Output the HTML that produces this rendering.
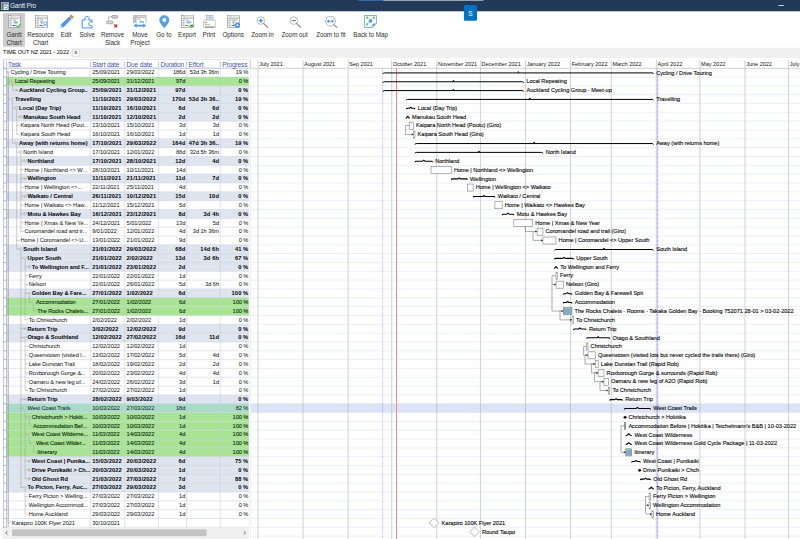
<!DOCTYPE html>
<html lang="en"><head><meta charset="utf-8"><title>Gantt Pro</title>
<style>
html,body{margin:0;padding:0;background:#fff;}
body{width:800px;height:539px;overflow:hidden;position:relative;font-family:"Liberation Sans",sans-serif;color:#1a1a1a;}
.abs{position:absolute;}
#title{left:10.0px;top:2.0px;font-size:6.5px;color:#e6eaef;line-height:7px;white-space:nowrap;letter-spacing:-0.2px;}
.tb{position:absolute;top:30.5px;font-size:6.3px;letter-spacing:-0.04px;line-height:8.1px;color:#2e2e2e;text-align:center;white-space:nowrap;transform:translateX(-50%);}
#tabtxt{left:3.1px;top:48.7px;-webkit-text-stroke:0.05px #222;font-size:5.5px;line-height:6px;color:#111;white-space:nowrap;}
#tabx{left:72.6px;top:49.4px;width:6.6px;height:6.8px;font-size:6.2px;line-height:6.2px;text-align:center;color:#222;}
.row{position:absolute;left:6.6px;width:242.4px;height:8.83px;}
.c{position:absolute;top:0.25px;font-size:5.7px;line-height:8.83px;height:8.83px;white-space:nowrap;color:#161616;letter-spacing:-0.08px;-webkit-text-stroke:0.03px #222;}
.b{font-weight:bold;letter-spacing:0.11px;color:#000;-webkit-text-stroke:0;}
.n.b{letter-spacing:-0.04px;}
.r{text-align:right;}
.hd{position:absolute;top:60.75px;font-size:6.55px;letter-spacing:-0.13px;line-height:8.6px;color:#4757a6;white-space:nowrap;}
.mo{position:absolute;top:59.5px;font-size:5.5px;line-height:8.3px;color:#111;white-space:nowrap;}
.gl{position:absolute;font-size:5.65px;line-height:8.83px;white-space:nowrap;color:#000;letter-spacing:-0.03px;-webkit-text-stroke:0.12px #222;}
</style></head><body>

<svg class="abs" style="left:0;top:0" width="800" height="539" viewBox="0 0 800 539"><rect x="0.00" y="0.00" width="800.00" height="11.30" fill="#223a57"/><rect x="358.40" y="0.00" width="24.80" height="0.90" fill="#2f6fb5"/><rect x="383.20" y="0.00" width="100.20" height="0.90" fill="#a9b1bd"/><rect x="778.30" y="5.00" width="5.60" height="0.85" fill="#dfe4ea"/><rect x="463.90" y="5.10" width="13.20" height="15.70" fill="#0072c1" rx="1.6"/><rect x="3.00" y="13.00" width="21.90" height="33.80" fill="#cdcdcd"/><rect x="0.00" y="47.70" width="800.00" height="10.30" fill="#f0f0f0"/><rect x="0.50" y="47.90" width="70.40" height="10.40" fill="#fff"/><rect x="72.60" y="49.40" width="6.60" height="6.80" fill="#f7f7f7" stroke="#d2d2d2" stroke-width="0.5"/><rect x="6.60" y="77.03" width="242.40" height="8.85" fill="#a8e494"/><rect x="6.60" y="85.86" width="242.40" height="8.85" fill="#dfe5ef"/><rect x="6.60" y="94.69" width="242.40" height="8.85" fill="#dfe5ef"/><rect x="6.60" y="103.52" width="242.40" height="8.85" fill="#dfe5ef"/><rect x="6.60" y="112.35" width="242.40" height="8.85" fill="#dfe5ef"/><rect x="6.60" y="138.84" width="242.40" height="8.85" fill="#dfe5ef"/><rect x="6.60" y="156.50" width="242.40" height="8.85" fill="#dfe5ef"/><rect x="6.60" y="174.16" width="242.40" height="8.85" fill="#dfe5ef"/><rect x="6.60" y="191.82" width="242.40" height="8.85" fill="#dfe5ef"/><rect x="6.60" y="209.48" width="242.40" height="8.85" fill="#dfe5ef"/><rect x="6.60" y="244.80" width="242.40" height="8.85" fill="#dfe5ef"/><rect x="6.60" y="253.63" width="242.40" height="8.85" fill="#dfe5ef"/><rect x="6.60" y="262.46" width="242.40" height="8.85" fill="#dfe5ef"/><rect x="6.60" y="288.95" width="242.40" height="8.85" fill="#dfe5ef"/><rect x="6.60" y="297.78" width="242.40" height="8.85" fill="#a8e494"/><rect x="6.60" y="306.61" width="242.40" height="8.85" fill="#a8e494"/><rect x="6.60" y="324.27" width="242.40" height="8.85" fill="#dfe5ef"/><rect x="6.60" y="333.10" width="242.40" height="8.85" fill="#dfe5ef"/><rect x="6.60" y="394.91" width="242.40" height="8.85" fill="#dfe5ef"/><rect x="6.60" y="403.74" width="242.40" height="8.85" fill="#a9dcc8"/><rect x="6.60" y="412.57" width="242.40" height="8.85" fill="#a8e494"/><rect x="6.60" y="421.40" width="242.40" height="8.85" fill="#a8e494"/><rect x="6.60" y="430.23" width="242.40" height="8.85" fill="#a8e494"/><rect x="6.60" y="439.06" width="242.40" height="8.85" fill="#a8e494"/><rect x="6.60" y="447.89" width="242.40" height="8.85" fill="#a8e494"/><rect x="6.60" y="456.72" width="242.40" height="8.85" fill="#dfe5ef"/><rect x="6.60" y="465.55" width="242.40" height="8.85" fill="#dfe5ef"/><rect x="6.60" y="474.38" width="242.40" height="8.85" fill="#dfe5ef"/><rect x="6.60" y="483.21" width="242.40" height="8.85" fill="#dfe5ef"/><rect x="250.70" y="403.74" width="549.60" height="8.83" fill="#dde3f7"/></svg>
<div id="title" class="abs">Gantt Pro</div>
<div class="abs" style="left:463.9px;top:5.85px;width:13.2px;height:15.7px;color:#fff;font-size:6.5px;line-height:15.7px;text-align:center">S</div>
<svg class="abs" style="left:0.8px;top:1.6px" width="8" height="8.4" viewBox="0 0 8 8.4"><rect x="0.2" y="0.2" width="7.6" height="8" fill="#eceef0" stroke="#9a9fa6" stroke-width="0.4"/><rect x="1.2" y="0.8" width="1.3" height="6.8" fill="#4d545c"/><path d="M0.4 2.2H7.6M0.4 4.2H2.6M0.4 6.2H2.6" stroke="#5d636b" stroke-width="0.45" fill="none"/><rect x="3.2" y="0.8" width="4" height="1.2" fill="#7d838b"/><rect x="3.4" y="3.6" width="2.8" height="1" fill="#3f86dc"/><path d="M4.3 6.3l1 1 1.9-2.2" stroke="#3da33d" stroke-width="0.9" fill="none"/></svg>
<div class="tb" style="left:14.0px">Gantt<br>Chart</div>
<div class="tb" style="left:40.6px">Resource<br>Chart</div>
<div class="tb" style="left:66.1px">Edit</div>
<div class="tb" style="left:87.2px">Solve</div>
<div class="tb" style="left:112.5px">Remove<br>Slack</div>
<div class="tb" style="left:140.0px">Move<br>Project</div>
<div class="tb" style="left:163.8px">Go to</div>
<div class="tb" style="left:187.1px">Export</div>
<div class="tb" style="left:208.9px">Print</div>
<div class="tb" style="left:233.1px">Options</div>
<div class="tb" style="left:262.4px">Zoom in</div>
<div class="tb" style="left:294.6px">Zoom out</div>
<div class="tb" style="left:330.8px">Zoom to fit</div>
<div class="tb" style="left:370.6px">Back to Map</div>
<svg class="abs" style="left:7.9px;top:14.9px" width="13" height="13.4" viewBox="0 0 13 13.4"><rect x="0.3" y="0.3" width="12" height="12.4" fill="#fff" stroke="#8d8d8d" stroke-width="0.6"/><rect x="3" y="0.6" width="9" height="2.6" fill="#e9e9e9"/><path d="M3 0.3V12.7M0.3 3.3H12.3M0.3 5.6H3M0.3 7.9H3M0.3 10.2H3" stroke="#8d8d8d" stroke-width="0.55" fill="none"/><rect x="4.4" y="4.3" width="3.6" height="1.5" fill="#c9c9c9"/><rect x="5.4" y="6.6" width="4.6" height="1" fill="#3f86d8"/><rect x="6.6" y="8.3" width="2.6" height="0.9" fill="#7db0ea"/><rect x="4.4" y="10" width="3.4" height="0.9" fill="#555"/><path d="M8.4 10.6l1.6 1.7 2.8-3.6" stroke="#3fae49" stroke-width="1.1" fill="none"/></svg>
<svg class="abs" style="left:34.5px;top:14.9px" width="13" height="13.4" viewBox="0 0 13 13.4"><rect x="0.3" y="0.3" width="12" height="12.4" fill="#fff" stroke="#8d8d8d" stroke-width="0.6"/><rect x="3" y="0.6" width="9" height="2.6" fill="#e9e9e9"/><path d="M3 0.3V12.7M0.3 3.3H12.3M0.3 5.6H3M0.3 7.9H3M0.3 10.2H3" stroke="#8d8d8d" stroke-width="0.55" fill="none"/><rect x="4.4" y="4.3" width="3.6" height="1.5" fill="#c9c9c9"/><rect x="5.4" y="6.6" width="2.6" height="1" fill="#3f86d8"/><rect x="5.8" y="8.3" width="1.8" height="0.9" fill="#7db0ea"/><rect x="4.4" y="10" width="3" height="0.9" fill="#555"/><circle cx="10.3" cy="8.2" r="1.5" fill="#fff" stroke="#4a90e2" stroke-width="0.7"/><path d="M7.9 12.9c0-2.2 1-2.9 2.4-2.9s2.4 0.7 2.4 2.9z" fill="#fff" stroke="#4a90e2" stroke-width="0.7"/></svg>
<svg class="abs" style="left:58.5px;top:13.6px" width="17" height="16" viewBox="0 0 17 16"><path d="M1.00 14.00L1.72 10.86L4.16 13.38Z" fill="#b4c8e0"/><path d="M1.72 10.86L10.30 2.56L12.73 5.07L4.16 13.38Z" fill="#4a90e2"/><path d="M2.87 9.75L5.31 12.27M4.17 8.50L6.60 11.01M5.46 7.25L7.89 9.76M6.75 6.00L9.19 8.51M8.04 4.74L10.48 7.26M9.34 3.49L11.77 6.01" stroke="#7fb3ee" stroke-width="0.45"/><path d="M10.73 2.14L12.38 0.54L14.82 3.06L13.16 4.66Z" fill="#bd8a30"/></svg>
<svg class="abs" style="left:81.4px;top:14.6px" width="13" height="14" viewBox="0 0 13 14"><path d="M1.2 5h3.1c-0.9-1.9-0.2-3.7 1.7-3.7s2.6 1.8 1.7 3.7h3.3v2.3c-1.9-0.9-3.3-0.2-3.3 1.5s1.4 2.4 3.3 1.5v2.6h-9.8z" fill="#fff" stroke="#4a8fdc" stroke-width="1"/></svg>
<svg class="abs" style="left:106px;top:14.8px" width="14" height="13.6" viewBox="0 0 14 13.6"><rect x="5.6" y="0.5" width="6.2" height="2.7" rx="1.1" fill="#cdcdcd" stroke="#868686" stroke-width="0.6"/><rect x="0.5" y="6" width="6.6" height="2.8" rx="1.1" fill="#d6d6d6" stroke="#868686" stroke-width="0.6"/><path d="M5.6 1.8H2.6V6" stroke="#8e8e8e" stroke-width="0.55" fill="none"/><path d="M8.3 9.3l3 3M11.3 9.3l-3 3" stroke="#c4161c" stroke-width="1.1"/></svg>
<svg class="abs" style="left:133.1px;top:14.9px" width="14" height="13.4" viewBox="0 0 14 13.4"><rect x="0.3" y="0.3" width="12.8" height="7.8" fill="#d6d6d6"/><rect x="3.2" y="2.6" width="9.6" height="5.6" fill="#fff"/><path d="M0.3 8.2V0.3H13.1V8.2M3.1 0.3V8.2M0.3 2.6H13.1M0.3 4.6H3M0.3 6.6H3" stroke="#9a9a9a" stroke-width="0.55" fill="none"/><rect x="4.4" y="3.6" width="3.4" height="1.3" fill="#c6c6c6"/><rect x="6.4" y="6.4" width="4.6" height="1" fill="#3f86d8"/><path d="M0.6 10.6l3-2.2v1.4h6.6V8.4l3 2.2-3 2.2v-1.4H3.6v1.4z" fill="#4f97e6"/></svg>
<svg class="abs" style="left:158.6px;top:14.7px" width="11" height="13.6" viewBox="0 0 11 13.6"><path d="M5.3 0.3c2.8 0 5 2.1 5 4.8 0 3.2-3.3 6-5 8.2-1.7-2.2-5-5-5-8.2 0-2.7 2.2-4.8 5-4.8z" fill="#5a9fe6"/><circle cx="5.3" cy="5" r="1.9" fill="#fff"/></svg>
<svg class="abs" style="left:180.8px;top:14.9px" width="13.4" height="13.4" viewBox="0 0 13.4 13.4"><rect x="0.3" y="0.3" width="12" height="12.4" fill="#fff" stroke="#8d8d8d" stroke-width="0.6"/><rect x="3" y="0.6" width="9" height="2.6" fill="#e9e9e9"/><path d="M3 0.3V12.7M0.3 3.3H12.3M0.3 5.6H3M0.3 7.9H3M0.3 10.2H3" stroke="#8d8d8d" stroke-width="0.55" fill="none"/><rect x="4.4" y="4.3" width="3.6" height="1.5" fill="#c9c9c9"/><rect x="5.4" y="6.6" width="4.6" height="1" fill="#3f86d8"/><rect x="6.6" y="8.3" width="1.6" height="0.9" fill="#7db0ea"/><rect x="4.4" y="10" width="2.4" height="0.9" fill="#555"/><path d="M7.6 11.8c0.5-1.3 1.6-1.9 3-1.9V8.8l2.4 2-2.4 2v-1.1c-1.2-0.1-2.2 0-3 0.1z" fill="#3fae49"/></svg>
<svg class="abs" style="left:202.8px;top:14.8px" width="13.4" height="13.6" viewBox="0 0 13.4 13.6"><rect x="3.2" y="0.4" width="6.8" height="5" fill="#e0e0e0" stroke="#9a9a9a" stroke-width="0.5"/><rect x="5.8" y="1.4" width="2.6" height="3" fill="#cfe1f7"/><rect x="6.4" y="2" width="1.6" height="0.7" fill="#4a90e2"/><rect x="0.4" y="5" width="12.4" height="7.4" rx="1.6" fill="#fff" stroke="#9a9a9a" stroke-width="0.6"/><rect x="2" y="11.4" width="9.4" height="1.4" fill="#9a9a9a"/><rect x="1.5" y="6.9" width="1.2" height="0.9" fill="#d33"/><rect x="2.9" y="6.9" width="1.2" height="0.9" fill="#3a3"/><rect x="1.5" y="9" width="5.4" height="0.7" fill="#d9a24a"/></svg>
<svg class="abs" style="left:227.1px;top:14.9px" width="13.4" height="13.4" viewBox="0 0 13.4 13.4"><rect x="0.3" y="0.3" width="12" height="12.4" fill="#fff" stroke="#8d8d8d" stroke-width="0.6"/><rect x="3" y="0.6" width="9" height="2.6" fill="#e9e9e9"/><path d="M3 0.3V12.7M0.3 3.3H12.3M0.3 5.6H3M0.3 7.9H3M0.3 10.2H3" stroke="#8d8d8d" stroke-width="0.55" fill="none"/><rect x="4.4" y="4.3" width="3.6" height="1.5" fill="#c9c9c9"/><rect x="4.4" y="4.3" width="6" height="1.5" fill="#c9c9c9"/><rect x="5.2" y="6.6" width="2.6" height="0.9" fill="#3f86d8"/><rect x="6.1" y="7.5" width="0.8" height="2" fill="#7db0ea"/><rect x="4.6" y="10" width="3" height="0.9" fill="#555"/><circle cx="10.4" cy="10.2" r="2.5" fill="#4a8fe0"/><circle cx="10.4" cy="10.2" r="2.9" fill="none" stroke="#4a8fe0" stroke-width="0.9" stroke-dasharray="1.1 1.18"/><rect x="9.5" y="9.4" width="1.8" height="1.6" fill="#fff"/></svg>
<svg class="abs" style="left:255px;top:14.5px" width="14" height="14" viewBox="0 0 14 14"><circle cx="5.8" cy="5.6" r="3.8" fill="#fff" stroke="#8c8c8c" stroke-width="0.6"/><path d="M8.54 8.34L12.44 12.24" stroke="#8c8c8c" stroke-width="1.1" stroke-linecap="round"/><path d="M3.7 5.6H7.9M5.8 3.5V7.7" stroke="#4a8fe0" stroke-width="1.3"/></svg>
<svg class="abs" style="left:288px;top:14.7px" width="14" height="14" viewBox="0 0 14 14"><circle cx="5.8" cy="5.6" r="3.8" fill="#fff" stroke="#8c8c8c" stroke-width="0.6"/><path d="M8.54 8.34L12.44 12.24" stroke="#8c8c8c" stroke-width="1.1" stroke-linecap="round"/><path d="M3.6 5.6H8" stroke="#4a8fe0" stroke-width="1.1"/></svg>
<svg class="abs" style="left:324px;top:14.6px" width="15" height="14" viewBox="0 0 15 14"><circle cx="6.5" cy="6.2" r="4.9" fill="#fff" stroke="#8c8c8c" stroke-width="0.6"/><path d="M10.03 9.73L12.73 12.43" stroke="#8c8c8c" stroke-width="1.1" stroke-linecap="round"/><path d="M2.8 6.2l2.2-1.7v3.4zM10.2 6.2l-2.2-1.7v3.4zM4.6 5.7h3.8v1H4.6z" fill="#4a8fe0"/></svg>
<svg class="abs" style="left:364.1px;top:15.1px" width="13.4" height="13" viewBox="0 0 13.4 13"><path d="M0.5 0.5H12.6V8.6L8.6 12.5H0.5z" fill="#fff" stroke="#4a8fe0" stroke-width="0.7"/><path d="M6.5 5.9L3 2.6M6.5 5.9L9.8 2.6M6.5 5.9L3 9.2" stroke="#8cc98c" stroke-width="0.5"/><rect x="2" y="1.6" width="2.2" height="2.2" rx="0.5" fill="#7cc47c"/><rect x="8.8" y="1.6" width="2.2" height="2.2" rx="0.5" fill="#7cc47c"/><rect x="2" y="8.2" width="2.2" height="2.2" rx="0.5" fill="#7cc47c"/><circle cx="6.5" cy="5.9" r="1.9" fill="#5a9fe6"/><path d="M7.6 12l1.4-3 3.2-0.9-2.3 2.1z" fill="#3f86d8"/></svg>
<div id="tabtxt" class="abs">TIME OUT NZ 2021 - 2022</div><div id="tabx" class="abs">x</div>
<div class="abs" style="left:2.6px;top:59.2px;width:246.4px;height:479.8px;border-left:0.5px solid #c5cad8;border-top:0.5px solid #e3e5ec;box-sizing:border-box"></div>
<div class="row" style="top:68.20px"><div class="c n" style="left:4.1px;">Cycling / Drive Touring</div><div class="c" style="left:85.7px;">25/09/2021</div><div class="c" style="left:120.0px;">29/03/2022</div><div class="c r" style="left:151.8px;width:26.9px;">186d</div><div class="c r" style="left:180.0px;width:32.4px;">53d 3h 36m</div><div class="c r" style="left:213.7px;width:28.0px;">19 %</div></div>
<div class="row" style="top:77.03px"><div class="c n" style="left:8.3px;color:#0a250a;-webkit-text-stroke:0.09px #0a250a;">Local Repeating</div><div class="c" style="left:85.7px;color:#0a250a;-webkit-text-stroke:0.09px #0a250a;">25/09/2021</div><div class="c" style="left:120.0px;color:#0a250a;-webkit-text-stroke:0.09px #0a250a;">31/12/2021</div><div class="c r" style="left:151.8px;width:26.9px;color:#0a250a;-webkit-text-stroke:0.09px #0a250a;">97d</div><div class="c r" style="left:180.0px;width:32.4px;color:#0a250a;-webkit-text-stroke:0.09px #0a250a;"></div><div class="c r" style="left:213.7px;width:28.0px;color:#0a250a;-webkit-text-stroke:0.09px #0a250a;">0 %</div></div>
<div class="row" style="top:85.86px"><div class="c b n" style="left:12.5px;">Auckland Cycling Group..</div><div class="c b" style="left:85.7px;">25/09/2021</div><div class="c b" style="left:120.0px;">31/12/2021</div><div class="c b r" style="left:151.8px;width:26.9px;">97d</div><div class="c b r" style="left:180.0px;width:32.4px;"></div><div class="c b r" style="left:213.7px;width:28.0px;">0 %</div></div>
<div class="row" style="top:94.69px"><div class="c b n" style="left:8.3px;">Travelling</div><div class="c b" style="left:85.7px;">11/10/2021</div><div class="c b" style="left:120.0px;">29/03/2022</div><div class="c b r" style="left:151.8px;width:26.9px;">170d</div><div class="c b r" style="left:180.0px;width:32.4px;">53d 3h 36..</div><div class="c b r" style="left:213.7px;width:28.0px;">19 %</div></div>
<div class="row" style="top:103.52px"><div class="c b n" style="left:12.5px;">Local (Day Trip)</div><div class="c b" style="left:85.7px;">11/10/2021</div><div class="c b" style="left:120.0px;">16/10/2021</div><div class="c b r" style="left:151.8px;width:26.9px;">6d</div><div class="c b r" style="left:180.0px;width:32.4px;">6d</div><div class="c b r" style="left:213.7px;width:28.0px;">0 %</div></div>
<div class="row" style="top:112.35px"><div class="c b n" style="left:16.7px;">Manukau South Head</div><div class="c b" style="left:85.7px;">11/10/2021</div><div class="c b" style="left:120.0px;">12/10/2021</div><div class="c b r" style="left:151.8px;width:26.9px;">2d</div><div class="c b r" style="left:180.0px;width:32.4px;">2d</div><div class="c b r" style="left:213.7px;width:28.0px;">0 %</div></div>
<div class="row" style="top:121.18px"><div class="c n" style="left:13.8px;">Kaipara North Head (Pout...</div><div class="c" style="left:85.7px;">13/10/2021</div><div class="c" style="left:120.0px;">15/10/2021</div><div class="c r" style="left:151.8px;width:26.9px;">3d</div><div class="c r" style="left:180.0px;width:32.4px;">3d</div><div class="c r" style="left:213.7px;width:28.0px;">0 %</div></div>
<div class="row" style="top:130.01px"><div class="c n" style="left:13.8px;">Kaipara South Head</div><div class="c" style="left:85.7px;">16/10/2021</div><div class="c" style="left:120.0px;">16/10/2021</div><div class="c r" style="left:151.8px;width:26.9px;">1d</div><div class="c r" style="left:180.0px;width:32.4px;">1d</div><div class="c r" style="left:213.7px;width:28.0px;">0 %</div></div>
<div class="row" style="top:138.84px"><div class="c b n" style="left:12.5px;">Away (with returns home)</div><div class="c b" style="left:85.7px;">17/10/2021</div><div class="c b" style="left:120.0px;">29/03/2022</div><div class="c b r" style="left:151.8px;width:26.9px;">164d</div><div class="c b r" style="left:180.0px;width:32.4px;">47d 3h 36..</div><div class="c b r" style="left:213.7px;width:28.0px;">19 %</div></div>
<div class="row" style="top:147.67px"><div class="c n" style="left:16.7px;">North Island</div><div class="c" style="left:85.7px;">17/10/2021</div><div class="c" style="left:120.0px;">12/01/2022</div><div class="c r" style="left:151.8px;width:26.9px;">88d</div><div class="c r" style="left:180.0px;width:32.4px;">32d 5h 36m</div><div class="c r" style="left:213.7px;width:28.0px;">0 %</div></div>
<div class="row" style="top:156.50px"><div class="c b n" style="left:20.9px;">Northland</div><div class="c b" style="left:85.7px;">17/10/2021</div><div class="c b" style="left:120.0px;">28/10/2021</div><div class="c b r" style="left:151.8px;width:26.9px;">12d</div><div class="c b r" style="left:180.0px;width:32.4px;">4d</div><div class="c b r" style="left:213.7px;width:28.0px;">0 %</div></div>
<div class="row" style="top:165.33px"><div class="c n" style="left:18.0px;">Home | Northland &lt;&gt; W...</div><div class="c" style="left:85.7px;">28/10/2021</div><div class="c" style="left:120.0px;">10/11/2021</div><div class="c r" style="left:151.8px;width:26.9px;">14d</div><div class="c r" style="left:180.0px;width:32.4px;"></div><div class="c r" style="left:213.7px;width:28.0px;">0 %</div></div>
<div class="row" style="top:174.16px"><div class="c b n" style="left:20.9px;">Wellington</div><div class="c b" style="left:85.7px;">11/11/2021</div><div class="c b" style="left:120.0px;">21/11/2021</div><div class="c b r" style="left:151.8px;width:26.9px;">11d</div><div class="c b r" style="left:180.0px;width:32.4px;">7d</div><div class="c b r" style="left:213.7px;width:28.0px;">0 %</div></div>
<div class="row" style="top:182.99px"><div class="c n" style="left:18.0px;">Home | Wellington &lt;&gt;...</div><div class="c" style="left:85.7px;">22/11/2021</div><div class="c" style="left:120.0px;">25/11/2021</div><div class="c r" style="left:151.8px;width:26.9px;">4d</div><div class="c r" style="left:180.0px;width:32.4px;"></div><div class="c r" style="left:213.7px;width:28.0px;">0 %</div></div>
<div class="row" style="top:191.82px"><div class="c b n" style="left:20.9px;">Waikato / Central</div><div class="c b" style="left:85.7px;">26/11/2021</div><div class="c b" style="left:120.0px;">10/12/2021</div><div class="c b r" style="left:151.8px;width:26.9px;">15d</div><div class="c b r" style="left:180.0px;width:32.4px;">10d</div><div class="c b r" style="left:213.7px;width:28.0px;">0 %</div></div>
<div class="row" style="top:200.65px"><div class="c n" style="left:18.0px;">Home | Waikato &lt;&gt; Haw...</div><div class="c" style="left:85.7px;">11/12/2021</div><div class="c" style="left:120.0px;">15/12/2021</div><div class="c r" style="left:151.8px;width:26.9px;">5d</div><div class="c r" style="left:180.0px;width:32.4px;"></div><div class="c r" style="left:213.7px;width:28.0px;">0 %</div></div>
<div class="row" style="top:209.48px"><div class="c b n" style="left:20.9px;">Motu &amp; Hawkes Bay</div><div class="c b" style="left:85.7px;">16/12/2021</div><div class="c b" style="left:120.0px;">23/12/2021</div><div class="c b r" style="left:151.8px;width:26.9px;">8d</div><div class="c b r" style="left:180.0px;width:32.4px;">3d 4h</div><div class="c b r" style="left:213.7px;width:28.0px;">0 %</div></div>
<div class="row" style="top:218.31px"><div class="c n" style="left:18.0px;">Home | Xmas &amp; New Ye...</div><div class="c" style="left:85.7px;">24/12/2021</div><div class="c" style="left:120.0px;">5/01/2022</div><div class="c r" style="left:151.8px;width:26.9px;">13d</div><div class="c r" style="left:180.0px;width:32.4px;">5d</div><div class="c r" style="left:213.7px;width:28.0px;">0 %</div></div>
<div class="row" style="top:227.14px"><div class="c n" style="left:18.0px;">Coromandel road and tr...</div><div class="c" style="left:85.7px;">9/01/2022</div><div class="c" style="left:120.0px;">12/01/2022</div><div class="c r" style="left:151.8px;width:26.9px;">4d</div><div class="c r" style="left:180.0px;width:32.4px;">3d 1h 36m</div><div class="c r" style="left:213.7px;width:28.0px;">0 %</div></div>
<div class="row" style="top:235.97px"><div class="c n" style="left:13.8px;">Home | Coromandel &lt;&gt; U...</div><div class="c" style="left:85.7px;">13/01/2022</div><div class="c" style="left:120.0px;">21/01/2022</div><div class="c r" style="left:151.8px;width:26.9px;">9d</div><div class="c r" style="left:180.0px;width:32.4px;"></div><div class="c r" style="left:213.7px;width:28.0px;">0 %</div></div>
<div class="row" style="top:244.80px"><div class="c b n" style="left:16.7px;">South Island</div><div class="c b" style="left:85.7px;">21/01/2022</div><div class="c b" style="left:120.0px;">29/03/2022</div><div class="c b r" style="left:151.8px;width:26.9px;">68d</div><div class="c b r" style="left:180.0px;width:32.4px;">14d 6h</div><div class="c b r" style="left:213.7px;width:28.0px;">41 %</div></div>
<div class="row" style="top:253.63px"><div class="c b n" style="left:20.9px;">Upper South</div><div class="c b" style="left:85.7px;">21/01/2022</div><div class="c b" style="left:120.0px;">2/02/2022</div><div class="c b r" style="left:151.8px;width:26.9px;">13d</div><div class="c b r" style="left:180.0px;width:32.4px;">3d 6h</div><div class="c b r" style="left:213.7px;width:28.0px;">67 %</div></div>
<div class="row" style="top:262.46px"><div class="c b n" style="left:25.1px;">To Wellington and F...</div><div class="c b" style="left:85.7px;">21/01/2022</div><div class="c b" style="left:120.0px;">23/01/2022</div><div class="c b r" style="left:151.8px;width:26.9px;">2d</div><div class="c b r" style="left:180.0px;width:32.4px;"></div><div class="c b r" style="left:213.7px;width:28.0px;">0 %</div></div>
<div class="row" style="top:271.29px"><div class="c n" style="left:22.2px;">Ferry</div><div class="c" style="left:85.7px;">22/01/2022</div><div class="c" style="left:120.0px;">22/01/2022</div><div class="c r" style="left:151.8px;width:26.9px;">1d</div><div class="c r" style="left:180.0px;width:32.4px;"></div><div class="c r" style="left:213.7px;width:28.0px;">0 %</div></div>
<div class="row" style="top:280.12px"><div class="c n" style="left:22.2px;">Nelson</div><div class="c" style="left:85.7px;">22/01/2022</div><div class="c" style="left:120.0px;">26/01/2022</div><div class="c r" style="left:151.8px;width:26.9px;">5d</div><div class="c r" style="left:180.0px;width:32.4px;">3d 6h</div><div class="c r" style="left:213.7px;width:28.0px;">0 %</div></div>
<div class="row" style="top:288.95px"><div class="c b n" style="left:25.1px;">Golden Bay &amp; Fare...</div><div class="c b" style="left:85.7px;">27/01/2022</div><div class="c b" style="left:120.0px;">1/02/2022</div><div class="c b r" style="left:151.8px;width:26.9px;">6d</div><div class="c b r" style="left:180.0px;width:32.4px;"></div><div class="c b r" style="left:213.7px;width:28.0px;">100 %</div></div>
<div class="row" style="top:297.78px"><div class="c n" style="left:29.3px;color:#0a250a;-webkit-text-stroke:0.09px #0a250a;">Accommodation</div><div class="c" style="left:85.7px;color:#0a250a;-webkit-text-stroke:0.09px #0a250a;">27/01/2022</div><div class="c" style="left:120.0px;color:#0a250a;-webkit-text-stroke:0.09px #0a250a;">1/02/2022</div><div class="c r" style="left:151.8px;width:26.9px;color:#0a250a;-webkit-text-stroke:0.09px #0a250a;">6d</div><div class="c r" style="left:180.0px;width:32.4px;color:#0a250a;-webkit-text-stroke:0.09px #0a250a;"></div><div class="c r" style="left:213.7px;width:28.0px;color:#0a250a;-webkit-text-stroke:0.09px #0a250a;">100 %</div></div>
<div class="row" style="top:306.61px"><div class="c n" style="left:30.6px;color:#0a250a;-webkit-text-stroke:0.09px #0a250a;">The Rocks Chalets...</div><div class="c" style="left:85.7px;color:#0a250a;-webkit-text-stroke:0.09px #0a250a;">27/01/2022</div><div class="c" style="left:120.0px;color:#0a250a;-webkit-text-stroke:0.09px #0a250a;">1/02/2022</div><div class="c r" style="left:151.8px;width:26.9px;color:#0a250a;-webkit-text-stroke:0.09px #0a250a;">6d</div><div class="c r" style="left:180.0px;width:32.4px;color:#0a250a;-webkit-text-stroke:0.09px #0a250a;"></div><div class="c r" style="left:213.7px;width:28.0px;color:#0a250a;-webkit-text-stroke:0.09px #0a250a;">100 %</div></div>
<div class="row" style="top:315.44px"><div class="c n" style="left:22.2px;">To Christchurch</div><div class="c" style="left:85.7px;">2/02/2022</div><div class="c" style="left:120.0px;">2/02/2022</div><div class="c r" style="left:151.8px;width:26.9px;">1d</div><div class="c r" style="left:180.0px;width:32.4px;"></div><div class="c r" style="left:213.7px;width:28.0px;">0 %</div></div>
<div class="row" style="top:324.27px"><div class="c b n" style="left:20.9px;">Return Trip</div><div class="c b" style="left:85.7px;">3/02/2022</div><div class="c b" style="left:120.0px;">12/02/2022</div><div class="c b r" style="left:151.8px;width:26.9px;">9d</div><div class="c b r" style="left:180.0px;width:32.4px;"></div><div class="c b r" style="left:213.7px;width:28.0px;">0 %</div></div>
<div class="row" style="top:333.10px"><div class="c b n" style="left:20.9px;">Otago &amp; Southland</div><div class="c b" style="left:85.7px;">12/02/2022</div><div class="c b" style="left:120.0px;">27/02/2022</div><div class="c b r" style="left:151.8px;width:26.9px;">16d</div><div class="c b r" style="left:180.0px;width:32.4px;">11d</div><div class="c b r" style="left:213.7px;width:28.0px;">0 %</div></div>
<div class="row" style="top:341.93px"><div class="c n" style="left:22.2px;">Christchurch</div><div class="c" style="left:85.7px;">12/02/2022</div><div class="c" style="left:120.0px;">12/02/2022</div><div class="c r" style="left:151.8px;width:26.9px;">1d</div><div class="c r" style="left:180.0px;width:32.4px;"></div><div class="c r" style="left:213.7px;width:28.0px;">0 %</div></div>
<div class="row" style="top:350.76px"><div class="c n" style="left:22.2px;">Queenstown (visited l...</div><div class="c" style="left:85.7px;">13/02/2022</div><div class="c" style="left:120.0px;">17/02/2022</div><div class="c r" style="left:151.8px;width:26.9px;">5d</div><div class="c r" style="left:180.0px;width:32.4px;">4d</div><div class="c r" style="left:213.7px;width:28.0px;">0 %</div></div>
<div class="row" style="top:359.59px"><div class="c n" style="left:22.2px;">Lake Dunstan Trail</div><div class="c" style="left:85.7px;">18/02/2022</div><div class="c" style="left:120.0px;">19/02/2022</div><div class="c r" style="left:151.8px;width:26.9px;">2d</div><div class="c r" style="left:180.0px;width:32.4px;">2d</div><div class="c r" style="left:213.7px;width:28.0px;">0 %</div></div>
<div class="row" style="top:368.42px"><div class="c n" style="left:22.2px;">Roxborough Gorge &amp;...</div><div class="c" style="left:85.7px;">20/02/2022</div><div class="c" style="left:120.0px;">23/02/2022</div><div class="c r" style="left:151.8px;width:26.9px;">4d</div><div class="c r" style="left:180.0px;width:32.4px;">4d</div><div class="c r" style="left:213.7px;width:28.0px;">0 %</div></div>
<div class="row" style="top:377.25px"><div class="c n" style="left:22.2px;">Oamaru &amp; new leg of...</div><div class="c" style="left:85.7px;">24/02/2022</div><div class="c" style="left:120.0px;">26/02/2022</div><div class="c r" style="left:151.8px;width:26.9px;">3d</div><div class="c r" style="left:180.0px;width:32.4px;">1d</div><div class="c r" style="left:213.7px;width:28.0px;">0 %</div></div>
<div class="row" style="top:386.08px"><div class="c n" style="left:22.2px;">To Christchurch</div><div class="c" style="left:85.7px;">27/02/2022</div><div class="c" style="left:120.0px;">27/02/2022</div><div class="c r" style="left:151.8px;width:26.9px;">1d</div><div class="c r" style="left:180.0px;width:32.4px;"></div><div class="c r" style="left:213.7px;width:28.0px;">0 %</div></div>
<div class="row" style="top:394.91px"><div class="c b n" style="left:20.9px;">Return Trip</div><div class="c b" style="left:85.7px;">28/02/2022</div><div class="c b" style="left:120.0px;">9/03/2022</div><div class="c b r" style="left:151.8px;width:26.9px;">9d</div><div class="c b r" style="left:180.0px;width:32.4px;"></div><div class="c b r" style="left:213.7px;width:28.0px;">0 %</div></div>
<div class="row" style="top:403.74px"><div class="c n" style="left:20.9px;">West Coast Trails</div><div class="c" style="left:85.7px;">10/03/2022</div><div class="c" style="left:120.0px;">27/03/2022</div><div class="c r" style="left:151.8px;width:26.9px;">18d</div><div class="c r" style="left:180.0px;width:32.4px;"></div><div class="c r" style="left:213.7px;width:28.0px;">82 %</div></div>
<div class="row" style="top:412.57px"><div class="c n" style="left:25.1px;color:#0a250a;-webkit-text-stroke:0.09px #0a250a;">Christchurch &gt; Hokiti...</div><div class="c" style="left:85.7px;color:#0a250a;-webkit-text-stroke:0.09px #0a250a;">10/03/2022</div><div class="c" style="left:120.0px;color:#0a250a;-webkit-text-stroke:0.09px #0a250a;">10/03/2022</div><div class="c r" style="left:151.8px;width:26.9px;color:#0a250a;-webkit-text-stroke:0.09px #0a250a;">1d</div><div class="c r" style="left:180.0px;width:32.4px;color:#0a250a;-webkit-text-stroke:0.09px #0a250a;"></div><div class="c r" style="left:213.7px;width:28.0px;color:#0a250a;-webkit-text-stroke:0.09px #0a250a;">100 %</div></div>
<div class="row" style="top:421.40px"><div class="c n" style="left:26.4px;color:#0a250a;-webkit-text-stroke:0.09px #0a250a;">Accommodation Bef...</div><div class="c" style="left:85.7px;color:#0a250a;-webkit-text-stroke:0.09px #0a250a;">10/03/2022</div><div class="c" style="left:120.0px;color:#0a250a;-webkit-text-stroke:0.09px #0a250a;">10/03/2022</div><div class="c r" style="left:151.8px;width:26.9px;color:#0a250a;-webkit-text-stroke:0.09px #0a250a;">1d</div><div class="c r" style="left:180.0px;width:32.4px;color:#0a250a;-webkit-text-stroke:0.09px #0a250a;"></div><div class="c r" style="left:213.7px;width:28.0px;color:#0a250a;-webkit-text-stroke:0.09px #0a250a;">100 %</div></div>
<div class="row" style="top:430.23px"><div class="c n" style="left:25.1px;color:#0a250a;-webkit-text-stroke:0.09px #0a250a;">West Coast Wilderne...</div><div class="c" style="left:85.7px;color:#0a250a;-webkit-text-stroke:0.09px #0a250a;">11/03/2022</div><div class="c" style="left:120.0px;color:#0a250a;-webkit-text-stroke:0.09px #0a250a;">14/03/2022</div><div class="c r" style="left:151.8px;width:26.9px;color:#0a250a;-webkit-text-stroke:0.09px #0a250a;">4d</div><div class="c r" style="left:180.0px;width:32.4px;color:#0a250a;-webkit-text-stroke:0.09px #0a250a;"></div><div class="c r" style="left:213.7px;width:28.0px;color:#0a250a;-webkit-text-stroke:0.09px #0a250a;">100 %</div></div>
<div class="row" style="top:439.06px"><div class="c n" style="left:29.3px;color:#0a250a;-webkit-text-stroke:0.09px #0a250a;">West Coast Wilder...</div><div class="c" style="left:85.7px;color:#0a250a;-webkit-text-stroke:0.09px #0a250a;">11/03/2022</div><div class="c" style="left:120.0px;color:#0a250a;-webkit-text-stroke:0.09px #0a250a;">14/03/2022</div><div class="c r" style="left:151.8px;width:26.9px;color:#0a250a;-webkit-text-stroke:0.09px #0a250a;">4d</div><div class="c r" style="left:180.0px;width:32.4px;color:#0a250a;-webkit-text-stroke:0.09px #0a250a;"></div><div class="c r" style="left:213.7px;width:28.0px;color:#0a250a;-webkit-text-stroke:0.09px #0a250a;">100 %</div></div>
<div class="row" style="top:447.89px"><div class="c n" style="left:30.6px;color:#0a250a;-webkit-text-stroke:0.09px #0a250a;">Itinerary</div><div class="c" style="left:85.7px;color:#0a250a;-webkit-text-stroke:0.09px #0a250a;">11/03/2022</div><div class="c" style="left:120.0px;color:#0a250a;-webkit-text-stroke:0.09px #0a250a;">14/03/2022</div><div class="c r" style="left:151.8px;width:26.9px;color:#0a250a;-webkit-text-stroke:0.09px #0a250a;">4d</div><div class="c r" style="left:180.0px;width:32.4px;color:#0a250a;-webkit-text-stroke:0.09px #0a250a;"></div><div class="c r" style="left:213.7px;width:28.0px;color:#0a250a;-webkit-text-stroke:0.09px #0a250a;">100 %</div></div>
<div class="row" style="top:456.72px"><div class="c b n" style="left:25.1px;">West Coast | Punika...</div><div class="c b" style="left:85.7px;">15/03/2022</div><div class="c b" style="left:120.0px;">20/03/2022</div><div class="c b r" style="left:151.8px;width:26.9px;">6d</div><div class="c b r" style="left:180.0px;width:32.4px;"></div><div class="c b r" style="left:213.7px;width:28.0px;">75 %</div></div>
<div class="row" style="top:465.55px"><div class="c b n" style="left:25.1px;">Drive Punikaiki &gt; Ch...</div><div class="c b" style="left:85.7px;">20/03/2022</div><div class="c b" style="left:120.0px;">20/03/2022</div><div class="c b r" style="left:151.8px;width:26.9px;">1d</div><div class="c b r" style="left:180.0px;width:32.4px;"></div><div class="c b r" style="left:213.7px;width:28.0px;">0 %</div></div>
<div class="row" style="top:474.38px"><div class="c b n" style="left:25.1px;">Old Ghost Rd</div><div class="c b" style="left:85.7px;">21/03/2022</div><div class="c b" style="left:120.0px;">27/03/2022</div><div class="c b r" style="left:151.8px;width:26.9px;">7d</div><div class="c b r" style="left:180.0px;width:32.4px;"></div><div class="c b r" style="left:213.7px;width:28.0px;">88 %</div></div>
<div class="row" style="top:483.21px"><div class="c b n" style="left:20.9px;">To Picton, Ferry, Auc...</div><div class="c b" style="left:85.7px;">27/03/2022</div><div class="c b" style="left:120.0px;">29/03/2022</div><div class="c b r" style="left:151.8px;width:26.9px;">3d</div><div class="c b r" style="left:180.0px;width:32.4px;"></div><div class="c b r" style="left:213.7px;width:28.0px;">0 %</div></div>
<div class="row" style="top:492.04px"><div class="c n" style="left:22.2px;">Ferry Picton &gt; Welling...</div><div class="c" style="left:85.7px;">27/03/2022</div><div class="c" style="left:120.0px;">27/03/2022</div><div class="c r" style="left:151.8px;width:26.9px;">1d</div><div class="c r" style="left:180.0px;width:32.4px;"></div><div class="c r" style="left:213.7px;width:28.0px;">0 %</div></div>
<div class="row" style="top:500.87px"><div class="c n" style="left:22.2px;">Wellington Accommod...</div><div class="c" style="left:85.7px;">27/03/2022</div><div class="c" style="left:120.0px;">27/03/2022</div><div class="c r" style="left:151.8px;width:26.9px;">1d</div><div class="c r" style="left:180.0px;width:32.4px;"></div><div class="c r" style="left:213.7px;width:28.0px;">0 %</div></div>
<div class="row" style="top:509.70px"><div class="c n" style="left:22.2px;">Home Auckland</div><div class="c" style="left:85.7px;">29/03/2022</div><div class="c" style="left:120.0px;">29/03/2022</div><div class="c r" style="left:151.8px;width:26.9px;">1d</div><div class="c r" style="left:180.0px;width:32.4px;"></div><div class="c r" style="left:213.7px;width:28.0px;">0 %</div></div>
<div class="row" style="top:518.53px"><div class="c n" style="left:5.4px;">Karapiro 100K Flyer 2021</div><div class="c" style="left:85.7px;">30/10/2021</div><div class="c" style="left:120.0px;"></div><div class="c r" style="left:151.8px;width:26.9px;"></div><div class="c r" style="left:180.0px;width:32.4px;"></div><div class="c r" style="left:213.7px;width:28.0px;"></div></div>
<svg class="abs" style="left:0;top:0" width="260" height="539" viewBox="0 0 260 539"><path d="M8.30 73.92V522.95" stroke="#9a9a9a" stroke-width="0.5"/><path d="M8.30 81.45H11.30" stroke="#9a9a9a" stroke-width="0.5"/><path d="M8.30 99.11H11.30" stroke="#9a9a9a" stroke-width="0.5"/><path d="M8.30 522.95H11.20" stroke="#9a9a9a" stroke-width="0.5"/><path d="M12.50 82.75V90.28" stroke="#9a9a9a" stroke-width="0.5"/><path d="M12.50 90.28H15.50" stroke="#9a9a9a" stroke-width="0.5"/><path d="M12.50 100.41V143.25" stroke="#9a9a9a" stroke-width="0.5"/><path d="M12.50 107.94H15.50" stroke="#9a9a9a" stroke-width="0.5"/><path d="M12.50 143.25H15.50" stroke="#9a9a9a" stroke-width="0.5"/><path d="M16.70 109.23V134.43" stroke="#9a9a9a" stroke-width="0.5"/><path d="M16.70 116.77H19.70" stroke="#9a9a9a" stroke-width="0.5"/><path d="M16.70 125.59H19.60" stroke="#9a9a9a" stroke-width="0.5"/><path d="M16.70 134.43H19.60" stroke="#9a9a9a" stroke-width="0.5"/><path d="M16.70 144.56V249.22" stroke="#9a9a9a" stroke-width="0.5"/><path d="M16.70 152.09H19.70" stroke="#9a9a9a" stroke-width="0.5"/><path d="M16.70 240.38H19.60" stroke="#9a9a9a" stroke-width="0.5"/><path d="M16.70 249.22H19.70" stroke="#9a9a9a" stroke-width="0.5"/><path d="M20.90 153.39V231.56" stroke="#9a9a9a" stroke-width="0.5"/><path d="M20.90 160.92H23.90" stroke="#9a9a9a" stroke-width="0.5"/><path d="M20.90 169.75H23.80" stroke="#9a9a9a" stroke-width="0.5"/><path d="M20.90 178.57H23.90" stroke="#9a9a9a" stroke-width="0.5"/><path d="M20.90 187.41H23.80" stroke="#9a9a9a" stroke-width="0.5"/><path d="M20.90 196.24H23.90" stroke="#9a9a9a" stroke-width="0.5"/><path d="M20.90 205.06H23.80" stroke="#9a9a9a" stroke-width="0.5"/><path d="M20.90 213.89H23.90" stroke="#9a9a9a" stroke-width="0.5"/><path d="M20.90 222.73H23.80" stroke="#9a9a9a" stroke-width="0.5"/><path d="M20.90 231.56H23.80" stroke="#9a9a9a" stroke-width="0.5"/><path d="M20.90 250.52V487.62" stroke="#9a9a9a" stroke-width="0.5"/><path d="M20.90 258.05H23.90" stroke="#9a9a9a" stroke-width="0.5"/><path d="M20.90 328.69H23.90" stroke="#9a9a9a" stroke-width="0.5"/><path d="M20.90 337.51H23.90" stroke="#9a9a9a" stroke-width="0.5"/><path d="M20.90 399.32H23.90" stroke="#9a9a9a" stroke-width="0.5"/><path d="M20.90 408.15H23.90" stroke="#9a9a9a" stroke-width="0.5"/><path d="M20.90 487.62H23.90" stroke="#9a9a9a" stroke-width="0.5"/><path d="M25.10 259.35V319.86" stroke="#9a9a9a" stroke-width="0.5"/><path d="M25.10 266.88H28.10" stroke="#9a9a9a" stroke-width="0.5"/><path d="M25.10 275.70H28.00" stroke="#9a9a9a" stroke-width="0.5"/><path d="M25.10 284.54H28.00" stroke="#9a9a9a" stroke-width="0.5"/><path d="M25.10 293.37H28.10" stroke="#9a9a9a" stroke-width="0.5"/><path d="M25.10 319.86H28.00" stroke="#9a9a9a" stroke-width="0.5"/><path d="M29.30 294.67V302.19" stroke="#9a9a9a" stroke-width="0.5"/><path d="M29.30 302.19H32.30" stroke="#9a9a9a" stroke-width="0.5"/><path d="M33.50 303.50V311.02" stroke="#9a9a9a" stroke-width="0.5"/><path d="M33.50 311.02H36.40" stroke="#9a9a9a" stroke-width="0.5"/><path d="M25.10 338.81V390.50" stroke="#9a9a9a" stroke-width="0.5"/><path d="M25.10 346.34H28.00" stroke="#9a9a9a" stroke-width="0.5"/><path d="M25.10 355.18H28.00" stroke="#9a9a9a" stroke-width="0.5"/><path d="M25.10 364.00H28.00" stroke="#9a9a9a" stroke-width="0.5"/><path d="M25.10 372.83H28.00" stroke="#9a9a9a" stroke-width="0.5"/><path d="M25.10 381.66H28.00" stroke="#9a9a9a" stroke-width="0.5"/><path d="M25.10 390.50H28.00" stroke="#9a9a9a" stroke-width="0.5"/><path d="M25.10 409.45V478.80" stroke="#9a9a9a" stroke-width="0.5"/><path d="M25.10 416.99H28.10" stroke="#9a9a9a" stroke-width="0.5"/><path d="M25.10 434.64H28.10" stroke="#9a9a9a" stroke-width="0.5"/><path d="M25.10 461.13H28.10" stroke="#9a9a9a" stroke-width="0.5"/><path d="M25.10 469.96H28.10" stroke="#9a9a9a" stroke-width="0.5"/><path d="M25.10 478.80H28.10" stroke="#9a9a9a" stroke-width="0.5"/><path d="M29.30 418.29V425.81" stroke="#9a9a9a" stroke-width="0.5"/><path d="M29.30 425.81H32.20" stroke="#9a9a9a" stroke-width="0.5"/><path d="M29.30 435.94V443.47" stroke="#9a9a9a" stroke-width="0.5"/><path d="M29.30 443.47H32.30" stroke="#9a9a9a" stroke-width="0.5"/><path d="M33.50 444.77V452.31" stroke="#9a9a9a" stroke-width="0.5"/><path d="M33.50 452.31H36.40" stroke="#9a9a9a" stroke-width="0.5"/><path d="M25.10 488.93V514.12" stroke="#9a9a9a" stroke-width="0.5"/><path d="M25.10 496.45H28.00" stroke="#9a9a9a" stroke-width="0.5"/><path d="M25.10 505.28H28.00" stroke="#9a9a9a" stroke-width="0.5"/><path d="M25.10 514.12H28.00" stroke="#9a9a9a" stroke-width="0.5"/><path d="M8.30 73.92V527.4" stroke="#9a9a9a" stroke-width="0.5"/><rect x="7.15" y="71.47" width="2.3" height="2.3" fill="#fff" fill-opacity="0.7" stroke="#a8a8a8" stroke-width="0.35"/><path d="M7.60 72.62H9.00" stroke="#555" stroke-width="0.4"/><rect x="11.35" y="80.30" width="2.3" height="2.3" fill="#fff" fill-opacity="0.7" stroke="#a8a8a8" stroke-width="0.35"/><path d="M11.80 81.45H13.20" stroke="#555" stroke-width="0.4"/><rect x="15.55" y="89.12" width="2.3" height="2.3" fill="#fff" fill-opacity="0.7" stroke="#a8a8a8" stroke-width="0.35"/><path d="M16.00 90.28H17.40" stroke="#555" stroke-width="0.4"/><path d="M16.70 89.58V90.98" stroke="#555" stroke-width="0.4"/><rect x="11.35" y="97.95" width="2.3" height="2.3" fill="#fff" fill-opacity="0.7" stroke="#a8a8a8" stroke-width="0.35"/><path d="M11.80 99.11H13.20" stroke="#555" stroke-width="0.4"/><rect x="15.55" y="106.78" width="2.3" height="2.3" fill="#fff" fill-opacity="0.7" stroke="#a8a8a8" stroke-width="0.35"/><path d="M16.00 107.94H17.40" stroke="#555" stroke-width="0.4"/><rect x="19.75" y="115.61" width="2.3" height="2.3" fill="#fff" fill-opacity="0.7" stroke="#a8a8a8" stroke-width="0.35"/><path d="M20.20 116.77H21.60" stroke="#555" stroke-width="0.4"/><path d="M20.90 116.06V117.47" stroke="#555" stroke-width="0.4"/><rect x="15.55" y="142.10" width="2.3" height="2.3" fill="#fff" fill-opacity="0.7" stroke="#a8a8a8" stroke-width="0.35"/><path d="M16.00 143.25H17.40" stroke="#555" stroke-width="0.4"/><rect x="19.75" y="150.94" width="2.3" height="2.3" fill="#fff" fill-opacity="0.7" stroke="#a8a8a8" stroke-width="0.35"/><path d="M20.20 152.09H21.60" stroke="#555" stroke-width="0.4"/><rect x="23.95" y="159.77" width="2.3" height="2.3" fill="#fff" fill-opacity="0.7" stroke="#a8a8a8" stroke-width="0.35"/><path d="M24.40 160.92H25.80" stroke="#555" stroke-width="0.4"/><path d="M25.10 160.22V161.62" stroke="#555" stroke-width="0.4"/><rect x="23.95" y="177.42" width="2.3" height="2.3" fill="#fff" fill-opacity="0.7" stroke="#a8a8a8" stroke-width="0.35"/><path d="M24.40 178.57H25.80" stroke="#555" stroke-width="0.4"/><path d="M25.10 177.88V179.27" stroke="#555" stroke-width="0.4"/><rect x="23.95" y="195.09" width="2.3" height="2.3" fill="#fff" fill-opacity="0.7" stroke="#a8a8a8" stroke-width="0.35"/><path d="M24.40 196.24H25.80" stroke="#555" stroke-width="0.4"/><path d="M25.10 195.54V196.94" stroke="#555" stroke-width="0.4"/><rect x="23.95" y="212.74" width="2.3" height="2.3" fill="#fff" fill-opacity="0.7" stroke="#a8a8a8" stroke-width="0.35"/><path d="M24.40 213.89H25.80" stroke="#555" stroke-width="0.4"/><path d="M25.10 213.19V214.59" stroke="#555" stroke-width="0.4"/><rect x="19.75" y="248.07" width="2.3" height="2.3" fill="#fff" fill-opacity="0.7" stroke="#a8a8a8" stroke-width="0.35"/><path d="M20.20 249.22H21.60" stroke="#555" stroke-width="0.4"/><rect x="23.95" y="256.90" width="2.3" height="2.3" fill="#fff" fill-opacity="0.7" stroke="#a8a8a8" stroke-width="0.35"/><path d="M24.40 258.05H25.80" stroke="#555" stroke-width="0.4"/><rect x="28.15" y="265.73" width="2.3" height="2.3" fill="#fff" fill-opacity="0.7" stroke="#a8a8a8" stroke-width="0.35"/><path d="M28.60 266.88H30.00" stroke="#555" stroke-width="0.4"/><path d="M29.30 266.18V267.57" stroke="#555" stroke-width="0.4"/><rect x="28.15" y="292.22" width="2.3" height="2.3" fill="#fff" fill-opacity="0.7" stroke="#a8a8a8" stroke-width="0.35"/><path d="M28.60 293.37H30.00" stroke="#555" stroke-width="0.4"/><rect x="32.35" y="301.05" width="2.3" height="2.3" fill="#fff" fill-opacity="0.7" stroke="#a8a8a8" stroke-width="0.35"/><path d="M32.80 302.19H34.20" stroke="#555" stroke-width="0.4"/><rect x="23.95" y="327.54" width="2.3" height="2.3" fill="#fff" fill-opacity="0.7" stroke="#a8a8a8" stroke-width="0.35"/><path d="M24.40 328.69H25.80" stroke="#555" stroke-width="0.4"/><path d="M25.10 327.99V329.38" stroke="#555" stroke-width="0.4"/><rect x="23.95" y="336.37" width="2.3" height="2.3" fill="#fff" fill-opacity="0.7" stroke="#a8a8a8" stroke-width="0.35"/><path d="M24.40 337.51H25.80" stroke="#555" stroke-width="0.4"/><rect x="23.95" y="398.18" width="2.3" height="2.3" fill="#fff" fill-opacity="0.7" stroke="#a8a8a8" stroke-width="0.35"/><path d="M24.40 399.32H25.80" stroke="#555" stroke-width="0.4"/><path d="M25.10 398.62V400.02" stroke="#555" stroke-width="0.4"/><rect x="23.95" y="407.00" width="2.3" height="2.3" fill="#fff" fill-opacity="0.7" stroke="#a8a8a8" stroke-width="0.35"/><path d="M24.40 408.15H25.80" stroke="#555" stroke-width="0.4"/><rect x="28.15" y="415.84" width="2.3" height="2.3" fill="#fff" fill-opacity="0.7" stroke="#a8a8a8" stroke-width="0.35"/><path d="M28.60 416.99H30.00" stroke="#555" stroke-width="0.4"/><path d="M29.30 416.29V417.69" stroke="#555" stroke-width="0.4"/><rect x="28.15" y="433.50" width="2.3" height="2.3" fill="#fff" fill-opacity="0.7" stroke="#a8a8a8" stroke-width="0.35"/><path d="M28.60 434.64H30.00" stroke="#555" stroke-width="0.4"/><rect x="32.35" y="442.32" width="2.3" height="2.3" fill="#fff" fill-opacity="0.7" stroke="#a8a8a8" stroke-width="0.35"/><path d="M32.80 443.47H34.20" stroke="#555" stroke-width="0.4"/><rect x="28.15" y="459.99" width="2.3" height="2.3" fill="#fff" fill-opacity="0.7" stroke="#a8a8a8" stroke-width="0.35"/><path d="M28.60 461.13H30.00" stroke="#555" stroke-width="0.4"/><path d="M29.30 460.44V461.83" stroke="#555" stroke-width="0.4"/><rect x="28.15" y="468.81" width="2.3" height="2.3" fill="#fff" fill-opacity="0.7" stroke="#a8a8a8" stroke-width="0.35"/><path d="M28.60 469.96H30.00" stroke="#555" stroke-width="0.4"/><path d="M29.30 469.26V470.66" stroke="#555" stroke-width="0.4"/><rect x="28.15" y="477.65" width="2.3" height="2.3" fill="#fff" fill-opacity="0.7" stroke="#a8a8a8" stroke-width="0.35"/><path d="M28.60 478.80H30.00" stroke="#555" stroke-width="0.4"/><path d="M29.30 478.10V479.50" stroke="#555" stroke-width="0.4"/><rect x="23.95" y="486.48" width="2.3" height="2.3" fill="#fff" fill-opacity="0.7" stroke="#a8a8a8" stroke-width="0.35"/><path d="M24.40 487.62H25.80" stroke="#555" stroke-width="0.4"/></svg>
<svg class="abs" style="left:0;top:0" width="800" height="539" viewBox="0 0 800 539"><path d="M2.8 68.20H249.0" stroke="#c9cfe2" stroke-width="0.5"/><path d="M2.8 77.03H249.0" stroke="#c9cfe2" stroke-width="0.5"/><path d="M2.8 85.86H249.0" stroke="#c9cfe2" stroke-width="0.5"/><path d="M2.8 94.69H249.0" stroke="#c9cfe2" stroke-width="0.5"/><path d="M2.8 103.52H249.0" stroke="#c9cfe2" stroke-width="0.5"/><path d="M2.8 112.35H249.0" stroke="#c9cfe2" stroke-width="0.5"/><path d="M2.8 121.18H249.0" stroke="#c9cfe2" stroke-width="0.5"/><path d="M2.8 130.01H249.0" stroke="#c9cfe2" stroke-width="0.5"/><path d="M2.8 138.84H249.0" stroke="#c9cfe2" stroke-width="0.5"/><path d="M2.8 147.67H249.0" stroke="#c9cfe2" stroke-width="0.5"/><path d="M2.8 156.50H249.0" stroke="#c9cfe2" stroke-width="0.5"/><path d="M2.8 165.33H249.0" stroke="#c9cfe2" stroke-width="0.5"/><path d="M2.8 174.16H249.0" stroke="#c9cfe2" stroke-width="0.5"/><path d="M2.8 182.99H249.0" stroke="#c9cfe2" stroke-width="0.5"/><path d="M2.8 191.82H249.0" stroke="#c9cfe2" stroke-width="0.5"/><path d="M2.8 200.65H249.0" stroke="#c9cfe2" stroke-width="0.5"/><path d="M2.8 209.48H249.0" stroke="#c9cfe2" stroke-width="0.5"/><path d="M2.8 218.31H249.0" stroke="#c9cfe2" stroke-width="0.5"/><path d="M2.8 227.14H249.0" stroke="#c9cfe2" stroke-width="0.5"/><path d="M2.8 235.97H249.0" stroke="#c9cfe2" stroke-width="0.5"/><path d="M2.8 244.80H249.0" stroke="#c9cfe2" stroke-width="0.5"/><path d="M2.8 253.63H249.0" stroke="#c9cfe2" stroke-width="0.5"/><path d="M2.8 262.46H249.0" stroke="#c9cfe2" stroke-width="0.5"/><path d="M2.8 271.29H249.0" stroke="#c9cfe2" stroke-width="0.5"/><path d="M2.8 280.12H249.0" stroke="#c9cfe2" stroke-width="0.5"/><path d="M2.8 288.95H249.0" stroke="#c9cfe2" stroke-width="0.5"/><path d="M2.8 297.78H249.0" stroke="#c9cfe2" stroke-width="0.5"/><path d="M2.8 306.61H249.0" stroke="#c9cfe2" stroke-width="0.5"/><path d="M2.8 315.44H249.0" stroke="#c9cfe2" stroke-width="0.5"/><path d="M2.8 324.27H249.0" stroke="#c9cfe2" stroke-width="0.5"/><path d="M2.8 333.10H249.0" stroke="#c9cfe2" stroke-width="0.5"/><path d="M2.8 341.93H249.0" stroke="#c9cfe2" stroke-width="0.5"/><path d="M2.8 350.76H249.0" stroke="#c9cfe2" stroke-width="0.5"/><path d="M2.8 359.59H249.0" stroke="#c9cfe2" stroke-width="0.5"/><path d="M2.8 368.42H249.0" stroke="#c9cfe2" stroke-width="0.5"/><path d="M2.8 377.25H249.0" stroke="#c9cfe2" stroke-width="0.5"/><path d="M2.8 386.08H249.0" stroke="#c9cfe2" stroke-width="0.5"/><path d="M2.8 394.91H249.0" stroke="#c9cfe2" stroke-width="0.5"/><path d="M2.8 403.74H249.0" stroke="#c9cfe2" stroke-width="0.5"/><path d="M2.8 412.57H249.0" stroke="#c9cfe2" stroke-width="0.5"/><path d="M2.8 421.40H249.0" stroke="#c9cfe2" stroke-width="0.5"/><path d="M2.8 430.23H249.0" stroke="#c9cfe2" stroke-width="0.5"/><path d="M2.8 439.06H249.0" stroke="#c9cfe2" stroke-width="0.5"/><path d="M2.8 447.89H249.0" stroke="#c9cfe2" stroke-width="0.5"/><path d="M2.8 456.72H249.0" stroke="#c9cfe2" stroke-width="0.5"/><path d="M2.8 465.55H249.0" stroke="#c9cfe2" stroke-width="0.5"/><path d="M2.8 474.38H249.0" stroke="#c9cfe2" stroke-width="0.5"/><path d="M2.8 483.21H249.0" stroke="#c9cfe2" stroke-width="0.5"/><path d="M2.8 492.04H249.0" stroke="#c9cfe2" stroke-width="0.5"/><path d="M2.8 500.87H249.0" stroke="#c9cfe2" stroke-width="0.5"/><path d="M2.8 509.70H249.0" stroke="#c9cfe2" stroke-width="0.5"/><path d="M2.8 518.53H249.0" stroke="#c9cfe2" stroke-width="0.5"/><path d="M2.8 527.36H249.0" stroke="#c9cfe2" stroke-width="0.5"/><path d="M2.8 536.19H249.0" stroke="#c9cfe2" stroke-width="0.5"/><path d="M90.4 68.2V539" stroke="#c3c9de" stroke-width="0.5"/><path d="M124.7 68.2V539" stroke="#c3c9de" stroke-width="0.5"/><path d="M158.4 68.2V539" stroke="#c3c9de" stroke-width="0.5"/><path d="M186.6 68.2V539" stroke="#c3c9de" stroke-width="0.5"/><path d="M220.3 68.2V539" stroke="#c3c9de" stroke-width="0.5"/><path d="M249.0 59.3V527.9" stroke="#e6e8ef" stroke-width="0.5"/><path d="M6.6 68.2V527.4" stroke="#8f9bc8" stroke-width="0.7"/><path d="M3 68.20H6.6" stroke="#9aa5cc" stroke-width="0.6"/><path d="M3 77.03H6.6" stroke="#9aa5cc" stroke-width="0.6"/><path d="M3 85.86H6.6" stroke="#9aa5cc" stroke-width="0.6"/><path d="M3 94.69H6.6" stroke="#9aa5cc" stroke-width="0.6"/><path d="M3 103.52H6.6" stroke="#9aa5cc" stroke-width="0.6"/><path d="M3 112.35H6.6" stroke="#9aa5cc" stroke-width="0.6"/><path d="M3 121.18H6.6" stroke="#9aa5cc" stroke-width="0.6"/><path d="M3 130.01H6.6" stroke="#9aa5cc" stroke-width="0.6"/><path d="M3 138.84H6.6" stroke="#9aa5cc" stroke-width="0.6"/><path d="M3 147.67H6.6" stroke="#9aa5cc" stroke-width="0.6"/><path d="M3 156.50H6.6" stroke="#9aa5cc" stroke-width="0.6"/><path d="M3 165.33H6.6" stroke="#9aa5cc" stroke-width="0.6"/><path d="M3 174.16H6.6" stroke="#9aa5cc" stroke-width="0.6"/><path d="M3 182.99H6.6" stroke="#9aa5cc" stroke-width="0.6"/><path d="M3 191.82H6.6" stroke="#9aa5cc" stroke-width="0.6"/><path d="M3 200.65H6.6" stroke="#9aa5cc" stroke-width="0.6"/><path d="M3 209.48H6.6" stroke="#9aa5cc" stroke-width="0.6"/><path d="M3 218.31H6.6" stroke="#9aa5cc" stroke-width="0.6"/><path d="M3 227.14H6.6" stroke="#9aa5cc" stroke-width="0.6"/><path d="M3 235.97H6.6" stroke="#9aa5cc" stroke-width="0.6"/><path d="M3 244.80H6.6" stroke="#9aa5cc" stroke-width="0.6"/><path d="M3 253.63H6.6" stroke="#9aa5cc" stroke-width="0.6"/><path d="M3 262.46H6.6" stroke="#9aa5cc" stroke-width="0.6"/><path d="M3 271.29H6.6" stroke="#9aa5cc" stroke-width="0.6"/><path d="M3 280.12H6.6" stroke="#9aa5cc" stroke-width="0.6"/><path d="M3 288.95H6.6" stroke="#9aa5cc" stroke-width="0.6"/><path d="M3 297.78H6.6" stroke="#9aa5cc" stroke-width="0.6"/><path d="M3 306.61H6.6" stroke="#9aa5cc" stroke-width="0.6"/><path d="M3 315.44H6.6" stroke="#9aa5cc" stroke-width="0.6"/><path d="M3 324.27H6.6" stroke="#9aa5cc" stroke-width="0.6"/><path d="M3 333.10H6.6" stroke="#9aa5cc" stroke-width="0.6"/><path d="M3 341.93H6.6" stroke="#9aa5cc" stroke-width="0.6"/><path d="M3 350.76H6.6" stroke="#9aa5cc" stroke-width="0.6"/><path d="M3 359.59H6.6" stroke="#9aa5cc" stroke-width="0.6"/><path d="M3 368.42H6.6" stroke="#9aa5cc" stroke-width="0.6"/><path d="M3 377.25H6.6" stroke="#9aa5cc" stroke-width="0.6"/><path d="M3 386.08H6.6" stroke="#9aa5cc" stroke-width="0.6"/><path d="M3 394.91H6.6" stroke="#9aa5cc" stroke-width="0.6"/><path d="M3 403.74H6.6" stroke="#9aa5cc" stroke-width="0.6"/><path d="M3 412.57H6.6" stroke="#9aa5cc" stroke-width="0.6"/><path d="M3 421.40H6.6" stroke="#9aa5cc" stroke-width="0.6"/><path d="M3 430.23H6.6" stroke="#9aa5cc" stroke-width="0.6"/><path d="M3 439.06H6.6" stroke="#9aa5cc" stroke-width="0.6"/><path d="M3 447.89H6.6" stroke="#9aa5cc" stroke-width="0.6"/><path d="M3 456.72H6.6" stroke="#9aa5cc" stroke-width="0.6"/><path d="M3 465.55H6.6" stroke="#9aa5cc" stroke-width="0.6"/><path d="M3 474.38H6.6" stroke="#9aa5cc" stroke-width="0.6"/><path d="M3 483.21H6.6" stroke="#9aa5cc" stroke-width="0.6"/><path d="M3 492.04H6.6" stroke="#9aa5cc" stroke-width="0.6"/><path d="M3 500.87H6.6" stroke="#9aa5cc" stroke-width="0.6"/><path d="M3 509.70H6.6" stroke="#9aa5cc" stroke-width="0.6"/><path d="M3 518.53H6.6" stroke="#9aa5cc" stroke-width="0.6"/><path d="M3 527.36H6.6" stroke="#9aa5cc" stroke-width="0.6"/><path d="M3 536.19H6.6" stroke="#9aa5cc" stroke-width="0.6"/><path d="M2.8 68.2H249.0" stroke="#a3adcf" stroke-width="0.6"/><path d="M6.5 61.4V66.9" stroke="#97a2c8" stroke-width="0.6"/><path d="M90.4 61.4V66.9" stroke="#97a2c8" stroke-width="0.6"/><path d="M124.7 61.4V66.9" stroke="#97a2c8" stroke-width="0.6"/><path d="M158.4 61.4V66.9" stroke="#97a2c8" stroke-width="0.6"/><path d="M186.6 61.4V66.9" stroke="#97a2c8" stroke-width="0.6"/><path d="M220.3 61.4V66.9" stroke="#97a2c8" stroke-width="0.6"/></svg>
<div class="hd" style="left:8.0px">Task</div>
<div class="hd" style="left:92.2px">Start date</div>
<div class="hd" style="left:126.5px">Due date</div>
<div class="hd" style="left:160.4px">Duration</div>
<div class="hd" style="left:188.6px">Effort</div>
<div class="hd" style="left:222.2px">Progress</div>
<svg class="abs" style="left:0;top:520px" width="260" height="19" viewBox="0 520 260 19"><rect x="2.8" y="527.9" width="246.2" height="11.2" fill="#f0f0f0"/><rect x="12.2" y="529.4" width="194.3" height="6.8" fill="#c2c2c2"/><path d="M7.4 531.2L5.9 532.8L7.4 534.4M244 531.2L245.5 532.8L244 534.4" stroke="#505050" stroke-width="0.8" fill="none"/></svg>
<svg class="abs" style="left:0;top:0" width="800" height="539" viewBox="0 0 800 539"><path d="M250.8 77.03H800" stroke="#dde3f5" stroke-width="0.55"/><path d="M250.8 85.86H800" stroke="#dde3f5" stroke-width="0.55"/><path d="M250.8 94.69H800" stroke="#dde3f5" stroke-width="0.55"/><path d="M250.8 103.52H800" stroke="#dde3f5" stroke-width="0.55"/><path d="M250.8 112.35H800" stroke="#dde3f5" stroke-width="0.55"/><path d="M250.8 121.18H800" stroke="#dde3f5" stroke-width="0.55"/><path d="M250.8 130.01H800" stroke="#dde3f5" stroke-width="0.55"/><path d="M250.8 138.84H800" stroke="#dde3f5" stroke-width="0.55"/><path d="M250.8 147.67H800" stroke="#dde3f5" stroke-width="0.55"/><path d="M250.8 156.50H800" stroke="#dde3f5" stroke-width="0.55"/><path d="M250.8 165.33H800" stroke="#dde3f5" stroke-width="0.55"/><path d="M250.8 174.16H800" stroke="#dde3f5" stroke-width="0.55"/><path d="M250.8 182.99H800" stroke="#dde3f5" stroke-width="0.55"/><path d="M250.8 191.82H800" stroke="#dde3f5" stroke-width="0.55"/><path d="M250.8 200.65H800" stroke="#dde3f5" stroke-width="0.55"/><path d="M250.8 209.48H800" stroke="#dde3f5" stroke-width="0.55"/><path d="M250.8 218.31H800" stroke="#dde3f5" stroke-width="0.55"/><path d="M250.8 227.14H800" stroke="#dde3f5" stroke-width="0.55"/><path d="M250.8 235.97H800" stroke="#dde3f5" stroke-width="0.55"/><path d="M250.8 244.80H800" stroke="#dde3f5" stroke-width="0.55"/><path d="M250.8 253.63H800" stroke="#dde3f5" stroke-width="0.55"/><path d="M250.8 262.46H800" stroke="#dde3f5" stroke-width="0.55"/><path d="M250.8 271.29H800" stroke="#dde3f5" stroke-width="0.55"/><path d="M250.8 280.12H800" stroke="#dde3f5" stroke-width="0.55"/><path d="M250.8 288.95H800" stroke="#dde3f5" stroke-width="0.55"/><path d="M250.8 297.78H800" stroke="#dde3f5" stroke-width="0.55"/><path d="M250.8 306.61H800" stroke="#dde3f5" stroke-width="0.55"/><path d="M250.8 315.44H800" stroke="#dde3f5" stroke-width="0.55"/><path d="M250.8 324.27H800" stroke="#dde3f5" stroke-width="0.55"/><path d="M250.8 333.10H800" stroke="#dde3f5" stroke-width="0.55"/><path d="M250.8 341.93H800" stroke="#dde3f5" stroke-width="0.55"/><path d="M250.8 350.76H800" stroke="#dde3f5" stroke-width="0.55"/><path d="M250.8 359.59H800" stroke="#dde3f5" stroke-width="0.55"/><path d="M250.8 368.42H800" stroke="#dde3f5" stroke-width="0.55"/><path d="M250.8 377.25H800" stroke="#dde3f5" stroke-width="0.55"/><path d="M250.8 386.08H800" stroke="#dde3f5" stroke-width="0.55"/><path d="M250.8 394.91H800" stroke="#dde3f5" stroke-width="0.55"/><path d="M250.8 403.74H800" stroke="#dde3f5" stroke-width="0.55"/><path d="M250.8 412.57H800" stroke="#dde3f5" stroke-width="0.55"/><path d="M250.8 421.40H800" stroke="#dde3f5" stroke-width="0.55"/><path d="M250.8 430.23H800" stroke="#dde3f5" stroke-width="0.55"/><path d="M250.8 439.06H800" stroke="#dde3f5" stroke-width="0.55"/><path d="M250.8 447.89H800" stroke="#dde3f5" stroke-width="0.55"/><path d="M250.8 456.72H800" stroke="#dde3f5" stroke-width="0.55"/><path d="M250.8 465.55H800" stroke="#dde3f5" stroke-width="0.55"/><path d="M250.8 474.38H800" stroke="#dde3f5" stroke-width="0.55"/><path d="M250.8 483.21H800" stroke="#dde3f5" stroke-width="0.55"/><path d="M250.8 492.04H800" stroke="#dde3f5" stroke-width="0.55"/><path d="M250.8 500.87H800" stroke="#dde3f5" stroke-width="0.55"/><path d="M250.8 509.70H800" stroke="#dde3f5" stroke-width="0.55"/><path d="M250.8 518.53H800" stroke="#dde3f5" stroke-width="0.55"/><path d="M250.8 527.36H800" stroke="#dde3f5" stroke-width="0.55"/><path d="M250.8 536.19H800" stroke="#dde3f5" stroke-width="0.55"/><path d="M250.4 68.3H800" stroke="#b4b4b4" stroke-width="0.6"/><path d="M250.4 59.3V539" stroke="#e2e2e2" stroke-width="0.6"/><path d="M250.4 59.3V68.3" stroke="#c4c4c4" stroke-width="0.6"/><path d="M258.00 60V539" stroke="#b6b6b6" stroke-width="0.62"/><path d="M303.06 60V539" stroke="#b6b6b6" stroke-width="0.62"/><path d="M348.13 60V539" stroke="#b6b6b6" stroke-width="0.62"/><path d="M391.74 60V539" stroke="#b6b6b6" stroke-width="0.62"/><path d="M436.81 60V539" stroke="#b6b6b6" stroke-width="0.62"/><path d="M480.42 60V539" stroke="#b6b6b6" stroke-width="0.62"/><path d="M525.48 60V539" stroke="#b6b6b6" stroke-width="0.62"/><path d="M570.55 60V539" stroke="#b6b6b6" stroke-width="0.62"/><path d="M611.25 60V539" stroke="#b6b6b6" stroke-width="0.62"/><path d="M656.31 60V539" stroke="#b6b6b6" stroke-width="0.62"/><path d="M699.92 60V539" stroke="#b6b6b6" stroke-width="0.62"/><path d="M744.99 60V539" stroke="#b6b6b6" stroke-width="0.62"/><path d="M788.60 60V539" stroke="#b6b6b6" stroke-width="0.62"/><path d="M382.6 68.4V539" stroke="#8486ee" stroke-width="0.65" stroke-dasharray="0.7 0.7"/><path d="M657.7 68.4V539" stroke="#7a7ce8" stroke-width="0.9" stroke-dasharray="0.8 0.5"/><path d="M396.5 68.4V539" stroke="#f47c7c" stroke-width="0.9"/><path d="M383.02 73.92Q383.12 72.92 384.22 72.92H652.21Q653.31 72.92 653.41 73.92" stroke="#000" stroke-width="1.0" fill="none" stroke-linejoin="round"/><path d="M516.71 72.62L518.21 71.22L519.71 72.62Z" fill="#000"/><path d="M383.02 82.75Q383.12 81.75 384.22 81.75H522.48Q523.58 81.75 523.68 82.75" stroke="#000" stroke-width="1.0" fill="none" stroke-linejoin="round"/><path d="M451.85 81.45L453.35 80.05L454.85 81.45Z" fill="#000"/><path d="M383.02 91.58Q383.12 90.58 384.22 90.58H522.48Q523.58 90.58 523.68 91.58" stroke="#000" stroke-width="1.0" fill="none" stroke-linejoin="round"/><path d="M451.85 90.28L453.35 88.88L454.85 90.28Z" fill="#000"/><path d="M406.28 100.41Q406.38 99.41 407.48 99.41H652.21Q653.31 99.41 653.41 100.41" stroke="#000" stroke-width="1.0" fill="none" stroke-linejoin="round"/><path d="M528.34 99.11L529.84 97.70L531.34 99.11Z" fill="#000"/><path d="M406.28 109.23Q406.38 108.23 407.48 108.23H409.44L410.64 107.19L411.84 108.23H413.80Q414.90 108.23 415.00 109.23" stroke="#000" stroke-width="1.05" fill="none" stroke-linejoin="round"/><path d="M405.78 118.27L407.73 115.86L409.68 118.27L408.78 118.27L407.73 117.16L406.68 118.27Z" stroke="#000" stroke-width="0.5" fill="#000" stroke-linejoin="round"/><rect x="409.18" y="122.25" width="4.36" height="7.0" fill="#fff" stroke="#858585" stroke-width="0.62"/><rect x="413.55" y="131.08" width="1.45" height="7.0" fill="#fff" stroke="#858585" stroke-width="0.62"/><path d="M415.00 144.56Q415.10 143.56 416.20 143.56H652.21Q653.31 143.56 653.41 144.56" stroke="#000" stroke-width="1.0" fill="none" stroke-linejoin="round"/><path d="M532.70 143.25L534.20 141.86L535.70 143.25Z" fill="#000"/><path d="M415.00 153.39Q415.10 152.39 416.20 152.39H541.73Q542.83 152.39 542.93 153.39" stroke="#000" stroke-width="1.0" fill="none" stroke-linejoin="round"/><path d="M477.46 152.09L478.96 150.69L480.46 152.09Z" fill="#000"/><path d="M415.00 162.22Q415.10 161.22 416.20 161.22H422.52L423.72 160.17L424.92 161.22H431.24Q432.34 161.22 432.44 162.22" stroke="#000" stroke-width="1.05" fill="none" stroke-linejoin="round"/><rect x="430.99" y="166.40" width="20.35" height="7.0" fill="#fff" stroke="#858585" stroke-width="0.62"/><path d="M451.34 179.88Q451.44 178.88 452.54 178.88H458.14L459.34 177.82L460.54 178.88H466.13Q467.23 178.88 467.33 179.88" stroke="#000" stroke-width="1.05" fill="none" stroke-linejoin="round"/><rect x="467.33" y="184.06" width="5.81" height="7.0" fill="#fff" stroke="#858585" stroke-width="0.62"/><path d="M473.15 197.54Q473.25 196.54 474.35 196.54H482.85L484.05 195.49L485.25 196.54H493.75Q494.85 196.54 494.95 197.54" stroke="#000" stroke-width="1.05" fill="none" stroke-linejoin="round"/><rect x="494.95" y="201.72" width="7.27" height="7.0" fill="#fff" stroke="#858585" stroke-width="0.62"/><path d="M502.22 215.19Q502.32 214.19 503.42 214.19H506.84L508.04 213.14L509.24 214.19H512.65Q513.75 214.19 513.85 215.19" stroke="#000" stroke-width="1.05" fill="none" stroke-linejoin="round"/><rect x="513.85" y="219.38" width="18.90" height="7.0" fill="#fff" stroke="#858585" stroke-width="0.62"/><rect x="537.11" y="228.21" width="5.81" height="7.0" fill="#fff" stroke="#858585" stroke-width="0.62"/><rect x="542.93" y="237.03" width="13.08" height="7.0" fill="#fff" stroke="#858585" stroke-width="0.62"/><path d="M554.55 250.52Q554.65 249.52 555.75 249.52H652.21Q653.31 249.52 653.41 250.52" stroke="#000" stroke-width="1.0" fill="none" stroke-linejoin="round"/><path d="M602.48 249.22L603.98 247.82L605.48 249.22Z" fill="#000"/><path d="M554.55 259.35Q554.65 258.35 555.75 258.35H562.80L564.00 257.30L565.20 258.35H572.25Q573.35 258.35 573.45 259.35" stroke="#000" stroke-width="1.05" fill="none" stroke-linejoin="round"/><path d="M554.05 268.38L556.01 265.98L557.97 268.38L557.07 268.38L556.01 267.28L554.95 268.38Z" stroke="#000" stroke-width="0.5" fill="#000" stroke-linejoin="round"/><rect x="556.01" y="272.35" width="1.45" height="7.0" fill="#fff" stroke="#858585" stroke-width="0.62"/><rect x="556.01" y="281.19" width="7.27" height="7.0" fill="#fff" stroke="#858585" stroke-width="0.62"/><path d="M563.28 294.67Q563.38 293.67 564.48 293.67H566.44L567.64 292.62L568.84 293.67H570.80Q571.90 293.67 572.00 294.67" stroke="#000" stroke-width="1.05" fill="none" stroke-linejoin="round"/><path d="M563.28 303.50Q563.38 302.50 564.48 302.50H566.44L567.64 301.44L568.84 302.50H570.80Q571.90 302.50 572.00 303.50" stroke="#000" stroke-width="1.05" fill="none" stroke-linejoin="round"/><rect x="563.28" y="307.52" width="8.72" height="7.2" fill="#8ed47a"/><rect x="563.28" y="308.82" width="8.72" height="4.7" fill="#8aa2d8"/><rect x="563.28" y="307.52" width="8.72" height="7.2" fill="none" stroke="#707880" stroke-width="0.5"/><rect x="572.00" y="316.50" width="1.45" height="7.0" fill="#fff" stroke="#858585" stroke-width="0.62"/><path d="M573.45 329.99Q573.55 328.99 574.65 328.99H578.57L579.77 327.94L580.97 328.99H584.89Q585.99 328.99 586.09 329.99" stroke="#000" stroke-width="1.05" fill="none" stroke-linejoin="round"/><path d="M586.54 338.81Q586.64 337.81 587.74 337.81H596.97L598.17 336.76L599.37 337.81H608.60Q609.70 337.81 609.80 338.81" stroke="#000" stroke-width="1.05" fill="none" stroke-linejoin="round"/><rect x="586.54" y="342.99" width="1.45" height="7.0" fill="#fff" stroke="#858585" stroke-width="0.62"/><rect x="587.99" y="351.82" width="7.27" height="7.0" fill="#fff" stroke="#858585" stroke-width="0.62"/><rect x="595.26" y="360.65" width="2.91" height="7.0" fill="#fff" stroke="#858585" stroke-width="0.62"/><rect x="598.17" y="369.48" width="5.81" height="7.0" fill="#fff" stroke="#858585" stroke-width="0.62"/><rect x="603.98" y="378.31" width="4.36" height="7.0" fill="#fff" stroke="#858585" stroke-width="0.62"/><rect x="608.34" y="387.14" width="1.45" height="7.0" fill="#fff" stroke="#858585" stroke-width="0.62"/><path d="M609.80 400.62Q609.90 399.62 611.00 399.62H614.91L616.11 398.57L617.31 399.62H621.23Q622.33 399.62 622.43 400.62" stroke="#000" stroke-width="1.05" fill="none" stroke-linejoin="round"/><path d="M624.33 409.45Q624.43 408.45 625.53 408.45H636.22L637.42 407.40L638.62 408.45H649.30Q650.40 408.45 650.50 409.45" stroke="#000" stroke-width="1.05" fill="none" stroke-linejoin="round"/><path d="M623.16 417.34L625.06 415.74L626.96 417.34L625.06 418.94Z" fill="#000"/><rect x="624.33" y="422.31" width="1.45" height="7.2" fill="#8ed47a"/><rect x="624.33" y="423.62" width="1.45" height="4.7" fill="#8aa2d8"/><rect x="624.33" y="422.31" width="1.45" height="7.2" fill="none" stroke="#707880" stroke-width="0.5"/><path d="M625.79 435.94Q626.39 435.05 627.39 435.05L628.69 433.75L630.00 435.05Q631.00 435.05 631.60 435.94" stroke="#000" stroke-width="1.1" fill="none" stroke-linejoin="round"/><path d="M625.79 444.77Q626.39 443.88 627.39 443.88L628.69 442.57L630.00 443.88Q631.00 443.88 631.60 444.77" stroke="#000" stroke-width="1.1" fill="none" stroke-linejoin="round"/><rect x="625.79" y="448.81" width="5.81" height="7.2" fill="#8ed47a"/><rect x="625.79" y="450.11" width="5.81" height="4.7" fill="#8aa2d8"/><rect x="625.79" y="448.81" width="5.81" height="7.2" fill="none" stroke="#707880" stroke-width="0.5"/><path d="M631.60 462.44Q631.70 461.44 632.80 461.44H634.76L635.96 460.38L637.16 461.44H639.12Q640.22 461.44 640.32 462.44" stroke="#000" stroke-width="1.05" fill="none" stroke-linejoin="round"/><path d="M637.70 470.31L639.60 468.71L641.50 470.31L639.60 471.91Z" fill="#000"/><path d="M640.32 480.10Q640.42 479.10 641.52 479.10H644.21L645.41 478.05L646.61 479.10H649.30Q650.40 479.10 650.50 480.10" stroke="#000" stroke-width="1.05" fill="none" stroke-linejoin="round"/><path d="M648.55 489.12L651.23 486.73L653.91 489.12L653.01 489.12L651.23 488.03L649.45 489.12Z" stroke="#000" stroke-width="0.5" fill="#000" stroke-linejoin="round"/><rect x="649.05" y="493.10" width="1.45" height="7.0" fill="#fff" stroke="#858585" stroke-width="0.62"/><rect x="649.05" y="501.93" width="1.45" height="7.0" fill="#fff" stroke="#858585" stroke-width="0.62"/><rect x="651.95" y="510.76" width="1.45" height="7.0" fill="#fff" stroke="#858585" stroke-width="0.62"/><path d="M429.20 522.95L434.00 518.15L438.80 522.95L434.00 527.75Z" fill="#fff" stroke="#9a9a9a" stroke-width="0.65"/><path d="M469.70 531.77L474.50 526.98L479.30 531.77L474.50 536.57Z" fill="#fff" stroke="#9a9a9a" stroke-width="0.65"/><path d="M409.18 125.59 L405.58 125.59 L405.58 134.43 L413.55 134.43" stroke="#747474" stroke-width="0.6" fill="none"/><path d="M413.55 134.43l-1.9 -1.05v2.1z" fill="#222"/><path d="M525.40 226.03 L525.40 231.56 L537.11 231.56" stroke="#747474" stroke-width="0.6" fill="none"/><path d="M537.11 231.56l-1.9 -1.05v2.1z" fill="#222"/><path d="M533.00 231.56 L533.00 240.38 L542.93 240.38" stroke="#747474" stroke-width="0.6" fill="none"/><path d="M542.93 240.38l-1.9 -1.05v2.1z" fill="#222"/><path d="M556.01 275.70 L552.00 275.70 L552.00 311.02 L563.28 311.02" stroke="#747474" stroke-width="0.6" fill="none"/><path d="M563.28 311.02l-1.9 -1.05v2.1z" fill="#222"/><path d="M552.00 284.54 L556.01 284.54" stroke="#747474" stroke-width="0.6" fill="none"/><path d="M556.01 284.54l-1.9 -1.05v2.1z" fill="#222"/><path d="M560.00 311.02 L560.00 319.86 L572.00 319.86" stroke="#747474" stroke-width="0.6" fill="none"/><path d="M572.00 319.86l-1.9 -1.05v2.1z" fill="#222"/><path d="M586.54 346.34 L583.64 346.34 L583.64 355.18 L587.99 355.18" stroke="#747474" stroke-width="0.6" fill="none"/><path d="M587.99 355.18l-1.9 -1.05v2.1z" fill="#222"/><path d="M587.99 355.18 L584.99 355.18 L584.99 364.00 L595.26 364.00" stroke="#747474" stroke-width="0.6" fill="none"/><path d="M595.26 364.00l-1.9 -1.05v2.1z" fill="#222"/><path d="M595.26 364.00 L591.56 364.00 L591.56 372.83 L598.17 372.83" stroke="#747474" stroke-width="0.6" fill="none"/><path d="M598.17 372.83l-1.9 -1.05v2.1z" fill="#222"/><path d="M598.17 372.83 L594.57 372.83 L594.57 381.66 L603.98 381.66" stroke="#747474" stroke-width="0.6" fill="none"/><path d="M603.98 381.66l-1.9 -1.05v2.1z" fill="#222"/><path d="M603.98 381.66 L599.98 381.66 L599.98 390.50 L608.34 390.50" stroke="#747474" stroke-width="0.6" fill="none"/><path d="M608.34 390.50l-1.9 -1.05v2.1z" fill="#222"/><path d="M624.33 425.81 L621.00 425.81 L621.00 452.31 L625.79 452.31" stroke="#747474" stroke-width="0.6" fill="none"/><path d="M625.79 452.31l-1.9 -1.05v2.1z" fill="#222"/><path d="M649.05 496.45 L645.50 496.45 L645.50 513.12 L646.50 514.12 L651.95 514.12" stroke="#747474" stroke-width="0.6" fill="none"/><path d="M651.95 514.12l-1.9 -1.05v2.1z" fill="#222"/><path d="M645.50 505.28 L649.05 505.28" stroke="#747474" stroke-width="0.6" fill="none"/><path d="M649.05 505.28l-1.9 -1.05v2.1z" fill="#222"/></svg>
<div class="mo" style="left:259.2px">July 2021</div>
<div class="mo" style="left:304.3px">August 2021</div>
<div class="mo" style="left:349.3px">Sep 2021</div>
<div class="mo" style="left:392.9px">October 2021</div>
<div class="mo" style="left:438.0px">November 2021</div>
<div class="mo" style="left:481.6px">December 2021</div>
<div class="mo" style="left:526.7px">January 2022</div>
<div class="mo" style="left:571.7px">February 2022</div>
<div class="mo" style="left:612.4px">March 2022</div>
<div class="mo" style="left:657.5px">April 2022</div>
<div class="mo" style="left:701.1px">May 2022</div>
<div class="mo" style="left:746.2px">June 2022</div>
<div class="mo" style="left:789.8px">July 2022</div>
<div class="gl" style="left:656.2px;top:68.60px">Cycling / Drive Touring</div>
<div class="gl" style="left:526.5px;top:77.43px">Local Repeating</div>
<div class="gl" style="left:526.5px;top:86.26px">Auckland Cycling Group - Meet-up</div>
<div class="gl" style="left:656.2px;top:95.09px">Travelling</div>
<div class="gl" style="left:417.8px;top:103.92px">Local (Day Trip)</div>
<div class="gl" style="left:412.0px;top:112.75px">Manukau South Head</div>
<div class="gl" style="left:416.1px;top:121.38px">Kaipara North Head (Poutu) (Giro)</div>
<div class="gl" style="left:417.6px;top:130.21px">Kaipara South Head (Giro)</div>
<div class="gl" style="left:656.2px;top:139.24px">Away (with returns home)</div>
<div class="gl" style="left:545.7px;top:148.07px">North Island</div>
<div class="gl" style="left:435.2px;top:156.90px">Northland</div>
<div class="gl" style="left:453.9px;top:165.53px">Home | Northland &lt;&gt; Wellington</div>
<div class="gl" style="left:470.1px;top:174.56px">Wellington</div>
<div class="gl" style="left:475.7px;top:183.19px">Home | Wellington &lt;&gt; Waikato</div>
<div class="gl" style="left:497.8px;top:192.22px">Waikato / Central</div>
<div class="gl" style="left:504.8px;top:200.85px">Home | Waikato &lt;&gt; Hawkes Bay</div>
<div class="gl" style="left:516.7px;top:209.88px">Motu &amp; Hawkes Bay</div>
<div class="gl" style="left:535.3px;top:218.51px">Home | Xmas &amp; New Year</div>
<div class="gl" style="left:545.5px;top:227.34px">Coromandel road and trail (Giro)</div>
<div class="gl" style="left:558.6px;top:236.17px">Home | Coromandel &lt;&gt; Upper South</div>
<div class="gl" style="left:656.2px;top:245.20px">South Island</div>
<div class="gl" style="left:576.3px;top:254.03px">Upper South</div>
<div class="gl" style="left:560.3px;top:262.86px">To Wellington and Ferry</div>
<div class="gl" style="left:560.1px;top:271.49px">Ferry</div>
<div class="gl" style="left:565.9px;top:280.32px">Nelson (Giro)</div>
<div class="gl" style="left:574.8px;top:289.35px">Golden Bay &amp; Farewell Spit</div>
<div class="gl" style="left:574.8px;top:298.18px">Accommodation</div>
<div class="gl" style="left:574.6px;top:306.81px">The Rocks Chalets - Rooms - Takaka Golden Bay - Booking 752071 28-01 &gt; 03-02-2022</div>
<div class="gl" style="left:576.1px;top:315.64px">To Christchurch</div>
<div class="gl" style="left:588.9px;top:324.67px">Return Trip</div>
<div class="gl" style="left:612.6px;top:333.50px">Otago &amp; Southland</div>
<div class="gl" style="left:590.6px;top:342.13px">Christchurch</div>
<div class="gl" style="left:597.9px;top:350.96px">Queenstown (visited lots but never cycled the trails there) (Giro)</div>
<div class="gl" style="left:600.8px;top:359.79px">Lake Dunstan Trail (Rapid Rob)</div>
<div class="gl" style="left:606.6px;top:368.62px">Roxborough Gorge &amp; surrounds (Rapid Rob)</div>
<div class="gl" style="left:610.9px;top:377.45px">Oamaru &amp; new leg of A2O (Rapid Rob)</div>
<div class="gl" style="left:612.4px;top:386.28px">To Christchurch</div>
<div class="gl" style="left:625.2px;top:395.31px">Return Trip</div>
<div class="gl" style="left:653.3px;top:404.14px">West Coast Trails</div>
<div class="gl" style="left:628.4px;top:412.97px">Christchurch &gt; Hokitika</div>
<div class="gl" style="left:628.4px;top:421.60px">Accommodation Before | Hokitika | Teichelmann's B&amp;B | 10-03-2022</div>
<div class="gl" style="left:634.4px;top:430.63px">West Coast Wilderness</div>
<div class="gl" style="left:634.4px;top:439.46px">West Coast Wilderness Gold Cycle Package | 11-03-2022</div>
<div class="gl" style="left:634.2px;top:448.09px">Itinerary</div>
<div class="gl" style="left:643.1px;top:457.12px">West Coast | Punikaiki</div>
<div class="gl" style="left:642.9px;top:465.95px">Drive Punikaiki &gt; Chch</div>
<div class="gl" style="left:653.3px;top:474.78px">Old Ghost Rd</div>
<div class="gl" style="left:656.2px;top:483.61px">To Picton, Ferry, Auckland</div>
<div class="gl" style="left:653.1px;top:492.24px">Ferry Picton &gt; Wellington</div>
<div class="gl" style="left:653.1px;top:501.07px">Wellington Accommodation</div>
<div class="gl" style="left:656.0px;top:509.90px">Home Auckland</div>
<div class="gl" style="left:441.6px;top:518.73px">Karapiro 100K Flyer 2021</div>
<div class="gl" style="left:482.0px;top:527.56px">Round Taupo</div>
</body></html>
